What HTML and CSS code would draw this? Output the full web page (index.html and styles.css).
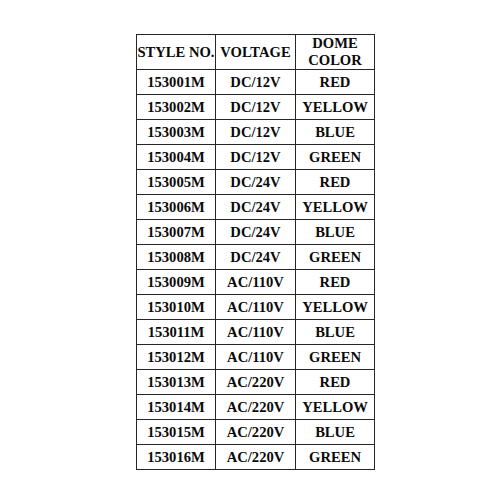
FILE: index.html
```html
<!DOCTYPE html>
<html>
<head>
<meta charset="utf-8">
<link rel="stylesheet" href="styles.css">
</head>
<body>
<div class="page">
<table class="spec">
<thead>
<tr><th class="c1">STYLE NO.</th><th class="c2">VOLTAGE</th><th class="c3">DOME<br>COLOR</th></tr>
</thead>
<tbody>
<tr><td>153001M</td><td>DC/12V</td><td>RED</td></tr>
<tr><td>153002M</td><td>DC/12V</td><td>YELLOW</td></tr>
<tr><td>153003M</td><td>DC/12V</td><td>BLUE</td></tr>
<tr><td>153004M</td><td>DC/12V</td><td>GREEN</td></tr>
<tr><td>153005M</td><td>DC/24V</td><td>RED</td></tr>
<tr><td>153006M</td><td>DC/24V</td><td>YELLOW</td></tr>
<tr><td>153007M</td><td>DC/24V</td><td>BLUE</td></tr>
<tr><td>153008M</td><td>DC/24V</td><td>GREEN</td></tr>
<tr><td>153009M</td><td>AC/110V</td><td>RED</td></tr>
<tr><td>153010M</td><td>AC/110V</td><td>YELLOW</td></tr>
<tr><td>153011M</td><td>AC/110V</td><td>BLUE</td></tr>
<tr><td>153012M</td><td>AC/110V</td><td>GREEN</td></tr>
<tr><td>153013M</td><td>AC/220V</td><td>RED</td></tr>
<tr><td>153014M</td><td>AC/220V</td><td>YELLOW</td></tr>
<tr><td>153015M</td><td>AC/220V</td><td>BLUE</td></tr>
<tr><td>153016M</td><td>AC/220V</td><td>GREEN</td></tr>
</tbody>
</table>
</div>
</body>
</html>
```
FILE: styles.css
```css
html, body {
  margin: 0;
  padding: 0;
  background: #ffffff;
}
.page {
  width: 500px;
  height: 500px;
  padding-top: 34px;
  padding-left: 136px;
  box-sizing: border-box;
}
.spec {
  border-collapse: collapse;
  table-layout: fixed;
  width: 235px;
  font-family: "Liberation Serif", "Times New Roman", serif;
  font-weight: bold;
  font-size: 14.6px;
  color: #0a0a0a;
}
.spec th, .spec td {
  border: 1px solid #262626;
  padding: 0;
  text-align: center;
  vertical-align: middle;
  white-space: nowrap;
}
.spec th {
  height: 32px;
  line-height: 17px;
}
.spec td {
  height: 24px;
  line-height: 16px;
}
.c1 { width: 78px; }
.c2 { width: 79px; }
.c3 { width: 78px; }
```
